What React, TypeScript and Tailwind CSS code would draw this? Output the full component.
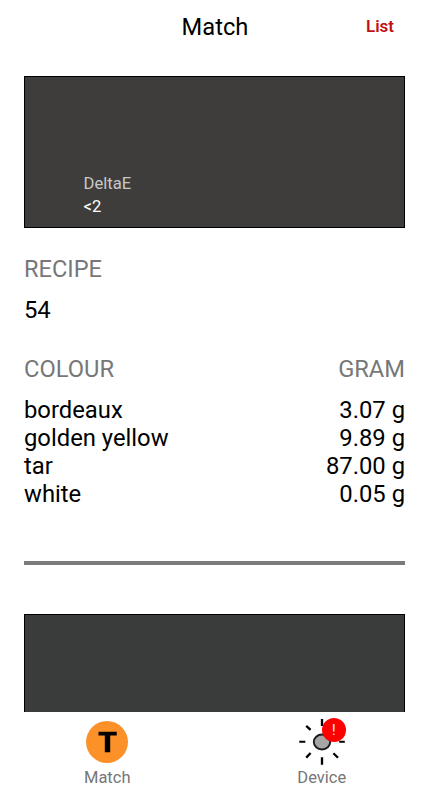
const colours = [
  { name: "bordeaux", gram: "3.07 g" },
  { name: "golden yellow", gram: "9.89 g" },
  { name: "tar", gram: "87.00 g" },
  { name: "white", gram: "0.05 g" },
];

function MatchIcon() {
  return (
    <svg width="42" height="42" viewBox="0 0 42 42">
      <circle cx="21" cy="21" r="21" fill="#fc9129" />
      <path d="M12.5 10.8h18.2v3.6H24.2V31.2h-5.4V14.4h-6.3z" fill="#000" />
    </svg>
  );
}

function DeviceIcon() {
  return (
    <svg width="48" height="48" viewBox="0 0 48 48">
      <g stroke="#000" strokeWidth="2.3">
        <path d="M24 1v7M24 39.3v7.4" />
        <path d="M1.3 23.8h6M41.2 23.8h5.6" strokeWidth="1.9" />
        <path d="M8.2 7.8l4.4 4M8.2 39.6l4.4-4.6M40 39.8l-4.6-4.6" />
      </g>
      <ellipse cx="24" cy="24" rx="8.2" ry="7.5" fill="#a6a6a6" stroke="#1b1b1b" strokeWidth="1.9" />
    </svg>
  );
}

export default function App() {
  return (
    <div className="flex h-[800px] w-[429px] flex-col overflow-hidden bg-white font-[Roboto,sans-serif] text-black">
      <header className="grid h-[76px] shrink-0 grid-cols-3 px-6">
        <span />
        <h1 className="mt-[13px] ml-px text-center text-[23.7px] leading-7 font-normal">Match</h1>
        <button className="mt-4 mr-[11px] h-5 text-right text-[17px] leading-5 font-semibold text-[#c11212]">
          List
        </button>
      </header>

      <main className="flex min-h-0 flex-1 flex-col overflow-hidden px-6 text-[23.8px] leading-7">
        <section className="flex h-[152px] shrink-0 flex-col border border-black bg-[#3e3d3b] pt-[95px] pl-[58.5px] text-[16.6px] leading-[23px]">
          <span className="text-[#c8c8c8]">DeltaE</span>
          <span className="text-white">&lt;2</span>
        </section>
        <h2 className="mt-[27px] text-[23.6px] text-[#777777]">RECIPE</h2>
        <p className="mt-[13px]">54</p>
        <div className="mt-[31px] flex justify-between text-[23.7px] text-[#777777]">
          <h2>COLOUR</h2>
          <h2>GRAM</h2>
        </div>
        <ul className="mt-[13px]">
          {colours.map((c) => (
            <li key={c.name} className="flex justify-between">
              <span>{c.name}</span>
              <span>{c.gram}</span>
            </li>
          ))}
        </ul>
        <div className="mt-[53px] h-1 shrink-0 bg-[#7c7a7b]" />
        <section className="mt-[49px] h-[152px] shrink-0 border border-black bg-[#3a3c3b]" />
      </main>

      <nav className="flex h-[88px] shrink-0 text-[16.5px] leading-5 text-[#767676]">
        <div className="flex w-1/2 flex-col items-center pt-[9px]">
          <MatchIcon />
          <span className="mt-[5px]">Match</span>
        </div>
        <div className="flex w-1/2 flex-col items-center pt-[6px]">
          <div className="relative">
            <DeviceIcon />
            <span className="absolute top-0 left-[24px] flex size-6 items-center justify-center rounded-full bg-[#fe0000] text-[14px] text-white">
              !
            </span>
          </div>
          <span className="mt-[2px]">Device</span>
        </div>
      </nav>
    </div>
  );
}
